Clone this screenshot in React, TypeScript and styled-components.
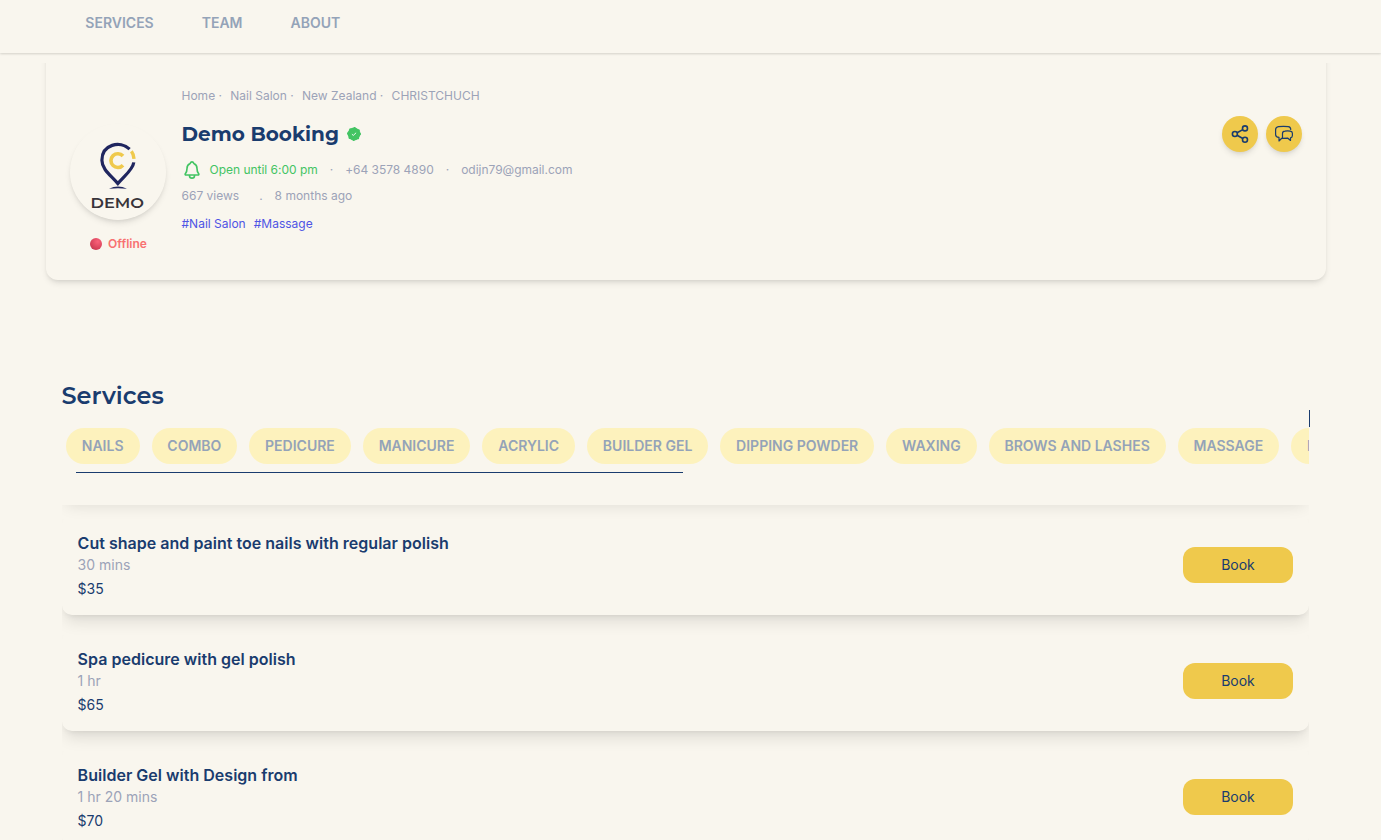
import React from "react";
import styled, { createGlobalStyle } from "styled-components";
import { IoNotificationsOutline } from "react-icons/io5";

const cream = "#f9f6ee";
const navy = "#1a3c6e";
const slate = "#9ca3b8";
const gold = "#efc94c";

const GlobalStyle = createGlobalStyle`
  *, *::before, *::after { box-sizing: border-box; }
  html, body { margin: 0; background: ${cream}; }
  body { font-family: Inter, "Liberation Sans", sans-serif; color: ${navy}; overflow: hidden; }
  h1, h2, h3, p { margin: 0; }
  button { font: inherit; border: 0; padding: 0; cursor: pointer; }
`;

const Page = styled.div`
  height: 840px;
  overflow: hidden;
  background: ${cream};
`;

const TopNav = styled.nav`
  display: flex;
  gap: 48px;
  height: 53px;
  padding: 13px 0 0 85.3px;
  box-shadow: 0 1px 2px rgba(0, 0, 0, 0.1), 0 1px 3px rgba(0, 0, 0, 0.06);
`;

const NavLink = styled.a`
  font-size: 14px;
  line-height: 20px;
  font-weight: 600;
  color: #94a3b8;
`;

const Content = styled.main`
  margin-top: 10px;
  height: 777px;
  overflow: hidden;
`;

const ProfileCard = styled.section`
  display: flex;
  width: 1280px;
  height: 237px;
  margin: -20px 0 0 46px;
  padding: 20px 24px 0;
  border-radius: 12px;
  box-shadow: 0 4px 6px -1px rgba(0, 0, 0, 0.1), 0 2px 4px -2px rgba(0, 0, 0, 0.1);
`;

const AvatarColumn = styled.div`
  display: flex;
  flex-direction: column;
  align-items: center;
  width: 96px;
  padding-top: 61px;
`;

const Avatar = styled.div`
  width: 96px;
  height: 96px;
  border-radius: 50%;
  box-shadow: 0 4px 6px -1px rgba(0, 0, 0, 0.1), 0 2px 4px -2px rgba(0, 0, 0, 0.1);
`;

const Status = styled.div`
  display: flex;
  align-items: center;
  gap: 6px;
  margin: 15px 0 0 1px;
  font-size: 12px;
  line-height: 18px;
  font-weight: 600;
  color: #f87171;
`;

const StatusDot = styled.span`
  width: 12px;
  height: 12px;
  border-radius: 50%;
  background: radial-gradient(circle at 65% 30%, #f9627a, #d8435a 60%, #b0304a);
`;

const Details = styled.div`
  flex: 1;
  padding: 24px 0 0 15.5px;
  font-size: 12px;
  line-height: 18px;
  color: ${slate};
`;

const Breadcrumbs = styled.div`
  display: flex;
  gap: 8.3px;
`;

const NameRow = styled.div`
  display: flex;
  align-items: center;
  gap: 7px;
  margin-top: 15px;
  height: 28px;
`;

const BusinessName = styled.h1`
  white-space: nowrap;
  font-family: Montserrat, Inter, sans-serif;
  font-size: 20px;
  line-height: 28px;
  font-weight: 700;
  color: ${navy};
`;

const ContactRow = styled.div`
  display: flex;
  align-items: center;
  gap: 12px;
  height: 20px;
  margin-top: 12px;
  letter-spacing: -0.02px;
`;

const OpenState = styled.span`
  display: flex;
  align-items: center;
  gap: 8px;
  color: #43c463;

  svg * {
    stroke-width: 42px;
  }
`;

const StatsRow = styled.div`
  display: flex;
  margin-top: 7px;
  gap: 20px;
`;

const StatAge = styled.span`
  margin-left: -8px;
`;

const Tags = styled.div`
  display: flex;
  gap: 8px;
  margin-top: 10px;
  color: #4f55e5;
`;

const Actions = styled.div`
  display: flex;
  gap: 8px;
  padding-top: 53px;
`;

const RoundButton = styled.button`
  display: grid;
  place-items: center;
  width: 36px;
  height: 36px;
  border-radius: 50%;
  background: ${gold};
  color: ${navy};
  box-shadow: 0 4px 6px -1px rgba(0, 0, 0, 0.1), 0 2px 4px -2px rgba(0, 0, 0, 0.1);
`;

const Services = styled.section`
  width: 1248px;
  margin: 101px 0 0 62px;
`;

const SectionTitle = styled.h2`
  height: 29px;
  margin-left: -0.5px;
  font-family: Montserrat, Inter, sans-serif;
  font-size: 24px;
  line-height: 30px;
  font-weight: 600;
`;

const Caret = styled.div`
  width: 1px;
  height: 17px;
  margin: 0 0 1px auto;
  background: ${navy};
`;

const Categories = styled.div`
  display: flex;
  gap: 12px;
  width: 1247px;
  padding-left: 4px;
  overflow: hidden;
`;

const Pill = styled.button`
  flex: none;
  height: 36px;
  padding: 0 16px 0 15.8px;
  border-radius: 18px;
  background: #fdf2bd;
  font-size: 14px;
  line-height: 20px;
  font-weight: 600;
  color: #94a3b8;
`;

const Underline = styled.div`
  width: 607px;
  height: 1px;
  margin: 8px 0 32px 14px;
  background: ${navy};
`;

const ServiceList = styled.div`
  display: flex;
  flex-direction: column;
  gap: 16px;
  width: 1247px;
  height: 335px;
  overflow: hidden;
`;

const ServiceCard = styled.article`
  display: flex;
  flex: none;
  align-items: center;
  justify-content: space-between;
  height: 100px;
  padding: 0 16px 0 15.6px;
  border-radius: 10px;
  box-shadow: 0 10px 15px -3px rgba(0, 0, 0, 0.1), 0 4px 6px -4px rgba(0, 0, 0, 0.1);

  &:first-child {
    margin-top: -106px;
  }
`;

const ServiceName = styled.h3`
  font-size: 16px;
  line-height: 24px;
  font-weight: 600;
  letter-spacing: 0.02px;
`;

const Duration = styled.p`
  font-size: 14px;
  line-height: 20px;
  color: ${slate};
`;

const Price = styled.p`
  margin-top: 4px;
  font-size: 14px;
  line-height: 20px;
`;

const BookButton = styled.button`
  width: 110px;
  height: 36px;
  border-radius: 12px;
  background: ${gold};
  color: ${navy};
  font-size: 14px;
  line-height: 20px;
`;

const Logo = () => (
  <svg width="96" height="96" viewBox="0 0 96 96" fill="none">
    <path d="M59.6 25.2 C50 16 31.9 20.5 31.9 36.2 C31.9 45.5 41 51.5 47.9 59.6 C54.5 51.5 62.8 46 63.8 38.4" stroke="#20265f" strokeWidth="3.2" />
    <path d="M53 32 A6.9 6.9 0 1 0 53 41.2" stroke={gold} strokeWidth="3.6" />
    <path d="M61.4 27.2 Q63.8 30.4 64 34.8" stroke={gold} strokeWidth="3.4" />
    <path d="M39 64.8 Q48 60.4 57 64.8 Q48 63.6 39 64.8Z" fill="#20265f" />
    <text x="20.5" y="83.5" textLength="53.5" lengthAdjust="spacingAndGlyphs" fontFamily="Montserrat, Inter, sans-serif" fontSize="15" fontWeight="600" fill="#38343a">DEMO</text>
  </svg>
);

const VerifiedBadge = () => (
  <svg width="16" height="16" viewBox="0 0 16 16" fill="none">
    <circle cx="8" cy="8" r="6.4" fill="#43c463" />
    <circle cx="8" cy="8" r="5.8" stroke="#43c463" strokeWidth="2.4" strokeLinecap="round" strokeDasharray="0.01 4.545" />
    <path d="M5.9 8.2 7.3 9.4 10.1 6.8" stroke="#fff" strokeWidth="0.9" />
  </svg>
);

const ShareIcon = () => (
  <svg width="20" height="20" viewBox="0 0 20 20" fill="none" stroke="currentColor" strokeWidth="1.6">
    <circle cx="4.9" cy="10" r="2.5" />
    <circle cx="15" cy="4.4" r="2.5" />
    <circle cx="15" cy="15.7" r="2.5" />
    <path d="M7.1 8.8 12.8 5.6 M7.1 11.2 12.8 14.5" />
  </svg>
);

const ChatIcon = () => (
  <svg width="20" height="20" viewBox="0 0 20 20" fill="none" stroke="currentColor" strokeWidth="1.2" strokeLinejoin="round">
    <path d="M16.8 5.9 C16.7 3.6 16 2.9 14.3 2.7 Q9.5 2.1 4.5 2.7 C2.3 3 1.6 4 1.6 5.8 V10.4 C1.6 12.3 2.4 13.1 5 13.4 V17 L8 14" />
    <path d="M11 7.1 Q13.5 6.8 16.2 7.1 Q18.4 7.4 18.4 9.2 V11.6 Q18.4 13.5 16.5 13.9 V16.5 L13.9 14.2 Q12 14.2 8.5 14.4 V9.4 Q8.5 7.3 11 7.1Z" />
  </svg>
);

const crumbs = ["Home ·", "Nail Salon ·", "New Zealand ·", "CHRISTCHUCH"];
const categories = ["NAILS", "COMBO", "PEDICURE", "MANICURE", "ACRYLIC", "BUILDER GEL", "DIPPING POWDER", "WAXING", "BROWS AND LASHES", "MASSAGE", "FACIAL"];
const services = [
  { name: "", duration: "", price: "" },
  { name: "Cut shape and paint toe nails with regular polish", duration: "30 mins", price: "$35" },
  { name: "Spa pedicure with gel polish", duration: "1 hr", price: "$65" },
  { name: "Builder Gel with Design from", duration: "1 hr 20 mins", price: "$70" },
];

export default function App() {
  return (
    <Page>
      <GlobalStyle />
      <TopNav>
        <NavLink>SERVICES</NavLink>
        <NavLink>TEAM</NavLink>
        <NavLink>ABOUT</NavLink>
      </TopNav>
      <Content>
        <ProfileCard>
          <AvatarColumn>
            <Avatar><Logo /></Avatar>
            <Status><StatusDot />Offline</Status>
          </AvatarColumn>
          <Details>
            <Breadcrumbs>{crumbs.map((c) => <span key={c}>{c}</span>)}</Breadcrumbs>
            <NameRow>
              <BusinessName>Demo Booking</BusinessName>
              <VerifiedBadge />
            </NameRow>
            <ContactRow>
              <OpenState><IoNotificationsOutline size={20} />Open until 6:00 pm</OpenState>
              <span>·</span>
              <span>+64 3578 4890</span>
              <span>·</span>
              <span>odijn79@gmail.com</span>
            </ContactRow>
            <StatsRow>
              <span>667 views</span>
              <span>.</span>
              <StatAge>8 months ago</StatAge>
            </StatsRow>
            <Tags><span>#Nail Salon</span><span>#Massage</span></Tags>
          </Details>
          <Actions>
            <RoundButton><ShareIcon /></RoundButton>
            <RoundButton><ChatIcon /></RoundButton>
          </Actions>
        </ProfileCard>
        <Services>
          <SectionTitle>Services</SectionTitle>
          <Caret />
          <Categories>{categories.map((c) => <Pill key={c}>{c}</Pill>)}</Categories>
          <Underline />
          <ServiceList>
            {services.map((s, i) => (
              <ServiceCard key={i}>
                {s.name && (
                  <>
                    <div>
                      <ServiceName>{s.name}</ServiceName>
                      <Duration>{s.duration}</Duration>
                      <Price>{s.price}</Price>
                    </div>
                    <BookButton>Book</BookButton>
                  </>
                )}
              </ServiceCard>
            ))}
          </ServiceList>
        </Services>
      </Content>
    </Page>
  );
}
